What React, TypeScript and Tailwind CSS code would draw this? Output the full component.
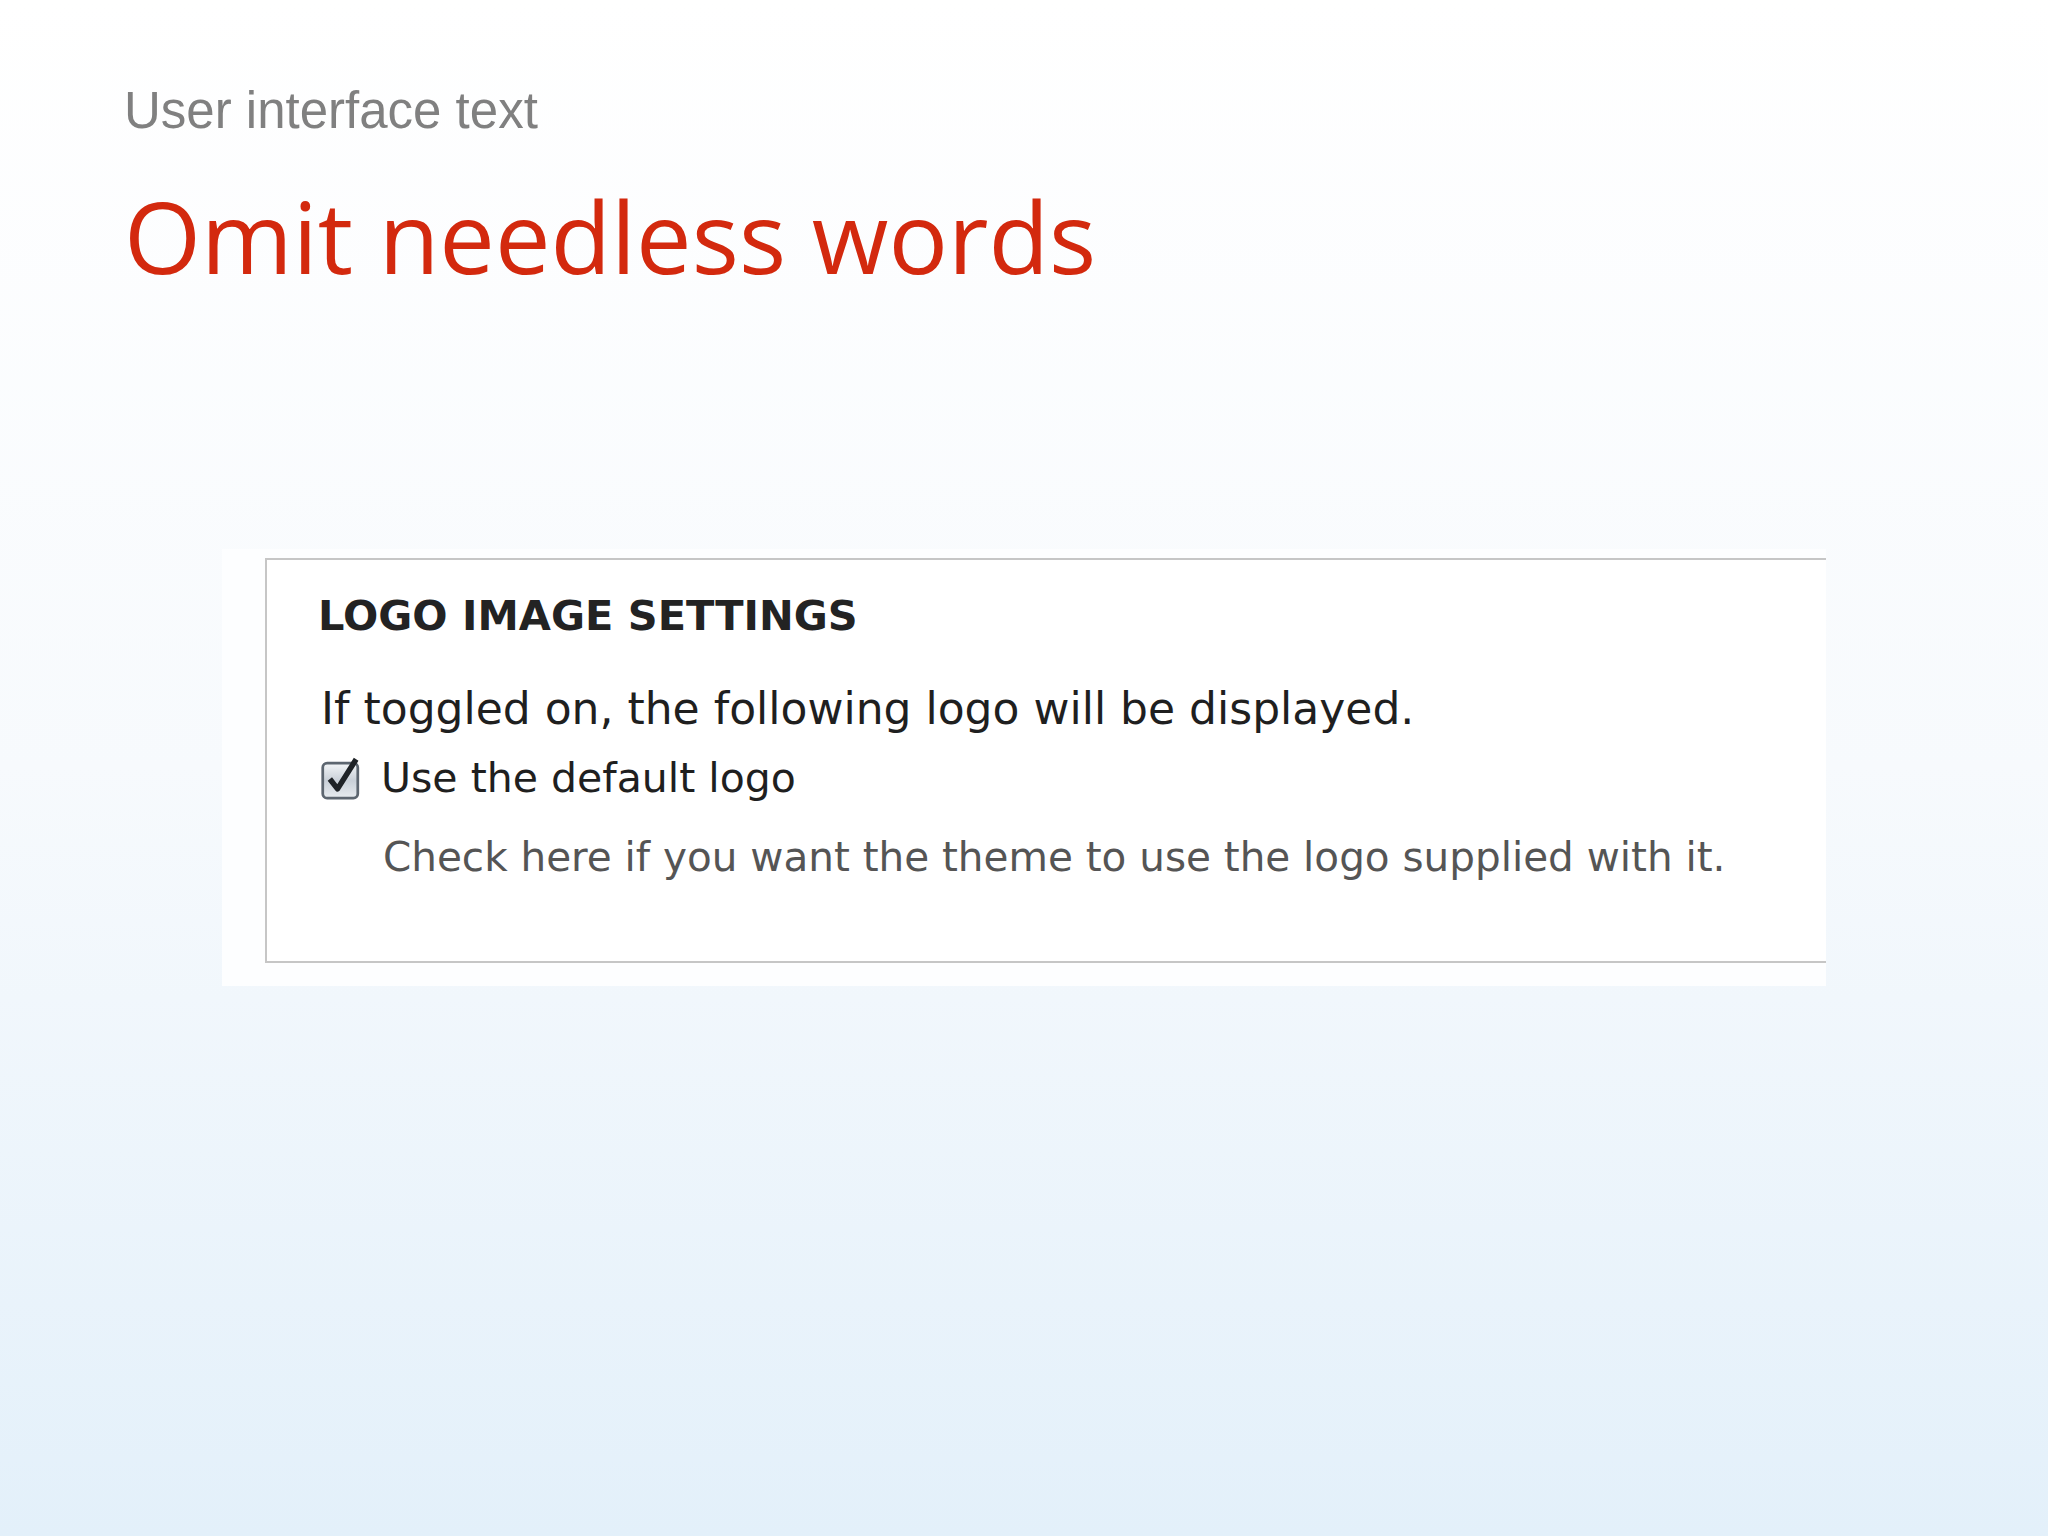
import React from 'react';

function CheckedBox() {
  return (
    <svg width="44" height="46" viewBox="0 0 40 42" className="shrink-0">
      <defs>
        <linearGradient id="cb" x1="0" y1="0" x2="0" y2="1">
          <stop offset="0" stopColor="#f4f6f8" />
          <stop offset="0.5" stopColor="#c9d0d8" />
          <stop offset="1" stopColor="#e8ecf0" />
        </linearGradient>
      </defs>
      <rect x="1.5" y="6.5" width="32" height="32" rx="4" fill="url(#cb)" stroke="#5d6670" strokeWidth="2.5" />
      <path d="M8 21 L15 30 L32 3" fill="none" stroke="#1f2327" strokeWidth="5" strokeLinejoin="round" />
    </svg>
  );
}

export default function App() {
  return (
    <main className="min-h-screen w-full bg-linear-to-b from-white via-[#f7fafd] to-[#e3f0fa] pb-20">
      <div className="pl-[124px] pt-[85px]">
        {/* Slide header */}
        <p className="font-['Liberation_Sans',Arial,sans-serif] text-[51px] leading-none text-[#808080]">
          User interface text
        </p>
        <h1 className="mt-[50px] font-['Open_Sans',sans-serif] text-[99px] leading-none text-[#d3290e]">
          Omit needless words
        </h1>
      </div>

      {/* Screenshot of the settings fieldset */}
      <div className="ml-[222px] mt-[264px] w-[1604px] h-[437px] bg-[#fdfeff] pt-[9px] pl-[43px]">
        <div className="h-[405px] border-y-2 border-l-2 border-[#c6c6c6] bg-white pl-[54px] pt-[35px] font-['DejaVu_Sans',Verdana,sans-serif]">
          <h2 className="-ml-[3px] text-[41.5px] font-bold leading-none text-[#232323]">
            LOGO IMAGE SETTINGS
          </h2>
          <p className="mt-[50px] text-[44px] leading-none text-[#1f1f1f]">
            If toggled on, the following logo will be displayed.
          </p>
          <label className="mt-[25px] flex items-center gap-[16px] text-[41px] leading-none text-[#1f1f1f]">
            <CheckedBox />
            <span>Use the default logo</span>
          </label>
          <p className="mt-[35px] pl-[62px] text-[40.5px] leading-none text-[#555555]">
            Check here if you want the theme to use the logo supplied with it.
          </p>
        </div>
      </div>
    </main>
  );
}
